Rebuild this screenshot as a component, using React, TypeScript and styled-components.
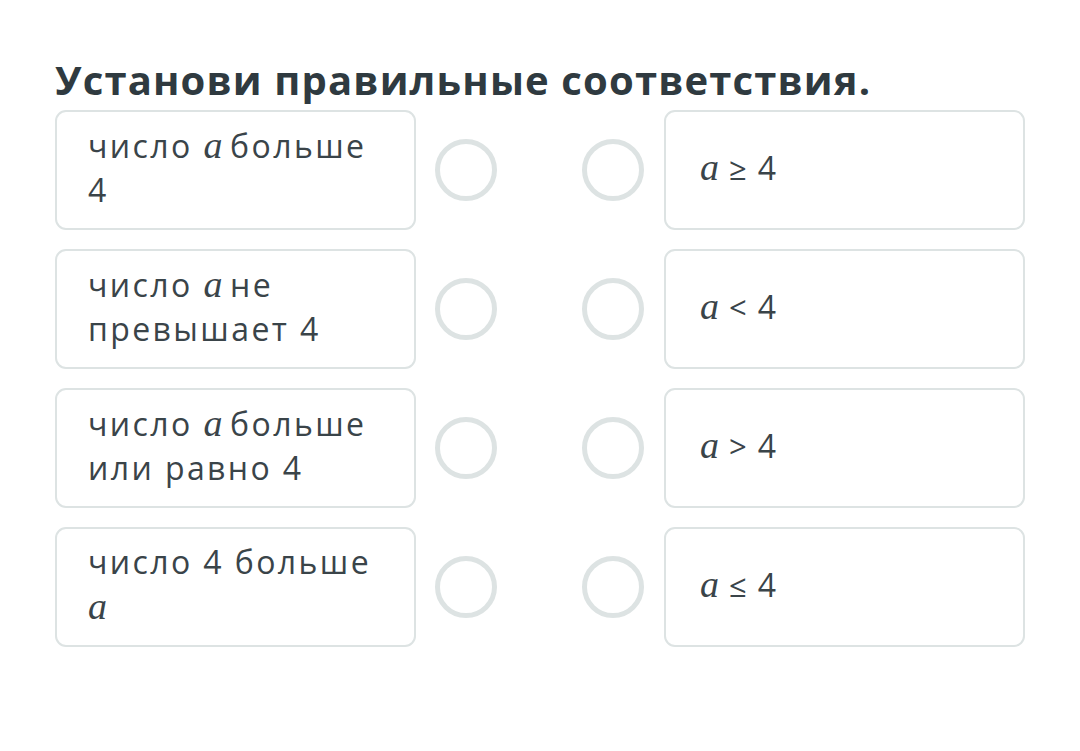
import React from "react";
import styled, { createGlobalStyle } from "styled-components";

const Global = createGlobalStyle`
  html, body { margin: 0; padding: 0; background: #ffffff; }
  body { font-family: "Open Sans", "Noto Sans", sans-serif; }
`;

const Page = styled.div`
  width: 1080px;
  height: 751px;
  box-sizing: border-box;
  padding: 56px 0 0 55px;
  background: #ffffff;
`;

const Title = styled.h1`
  margin: 0 0 6px 0;
  font-family: "Open Sans", sans-serif;
  font-weight: 700;
  font-size: 40px;
  line-height: 48px;
  color: #2f3a40;
  letter-spacing: 1.15px;
`;

const Rows = styled.div`
  display: flex;
  flex-direction: column;
  gap: 19px;
`;

const Grid = styled.div`
  display: grid;
  grid-template-columns: 361px 19px 62px 85px 62px 20px 361px;
  align-items: center;
`;

const Card = styled.div<{ $side: "left" | "right" }>`
  box-sizing: border-box;
  height: 120px;
  border: 2.5px solid #dde3e3;
  border-radius: 11px;
  background: #ffffff;
  padding: 0 8px 0 ${(p) => (p.$side === "left" ? "31px" : "34px")};
  display: flex;
  align-items: center;
  font-size: 32px;
  line-height: 44px;
  color: #3a4449;
  letter-spacing: 2.4px;
`;

const CardText = styled.div`
  margin-top: -5px;
  white-space: nowrap;
`;

const Circle = styled.div`
  box-sizing: border-box;
  width: 62px;
  height: 62px;
  border-radius: 50%;
  border: 5px solid #dde3e3;
`;

const Gap = styled.span``;

const Var = styled.span`
  font-family: "Liberation Serif", "DejaVu Serif", serif;
  font-style: italic;
  font-size: 38px;
  letter-spacing: 0;
`;

const Op = styled.span`
  font-family: "Open Sans", sans-serif;
  font-size: 31px;
  letter-spacing: 0;
  margin: 0 11px 0 10px;
`;

type Item = { left: React.ReactNode; right: React.ReactNode };

const items: Item[] = [
  {
    left: (
      <>
        число <Var>a</Var>&thinsp;больше
        <br />4
      </>
    ),
    right: (
      <>
        <Var>a</Var>
        <Op>≥</Op>4
      </>
    ),
  },
  {
    left: (
      <>
        число <Var>a</Var>&thinsp;не
        <br />
        превышает 4
      </>
    ),
    right: (
      <>
        <Var>a</Var>
        <Op>&lt;</Op>4
      </>
    ),
  },
  {
    left: (
      <>
        число <Var>a</Var>&thinsp;больше
        <br />
        или равно 4
      </>
    ),
    right: (
      <>
        <Var>a</Var>
        <Op>&gt;</Op>4
      </>
    ),
  },
  {
    left: (
      <>
        число 4 больше
        <br />
        <Var>a</Var>
      </>
    ),
    right: (
      <>
        <Var>a</Var>
        <Op>≤</Op>4
      </>
    ),
  },
];

export default function App() {
  return (
    <>
      <Global />
      <Page>
        <Title>Установи правильные соответствия.</Title>
        <Rows>
          {items.map((it, i) => (
            <Grid key={i}>
              <Card $side="left">
                <CardText>{it.left}</CardText>
              </Card>
              <Gap />
              <Circle />
              <Gap />
              <Circle />
              <Gap />
              <Card $side="right">
                <CardText>{it.right}</CardText>
              </Card>
            </Grid>
          ))}
        </Rows>
      </Page>
    </>
  );
}
